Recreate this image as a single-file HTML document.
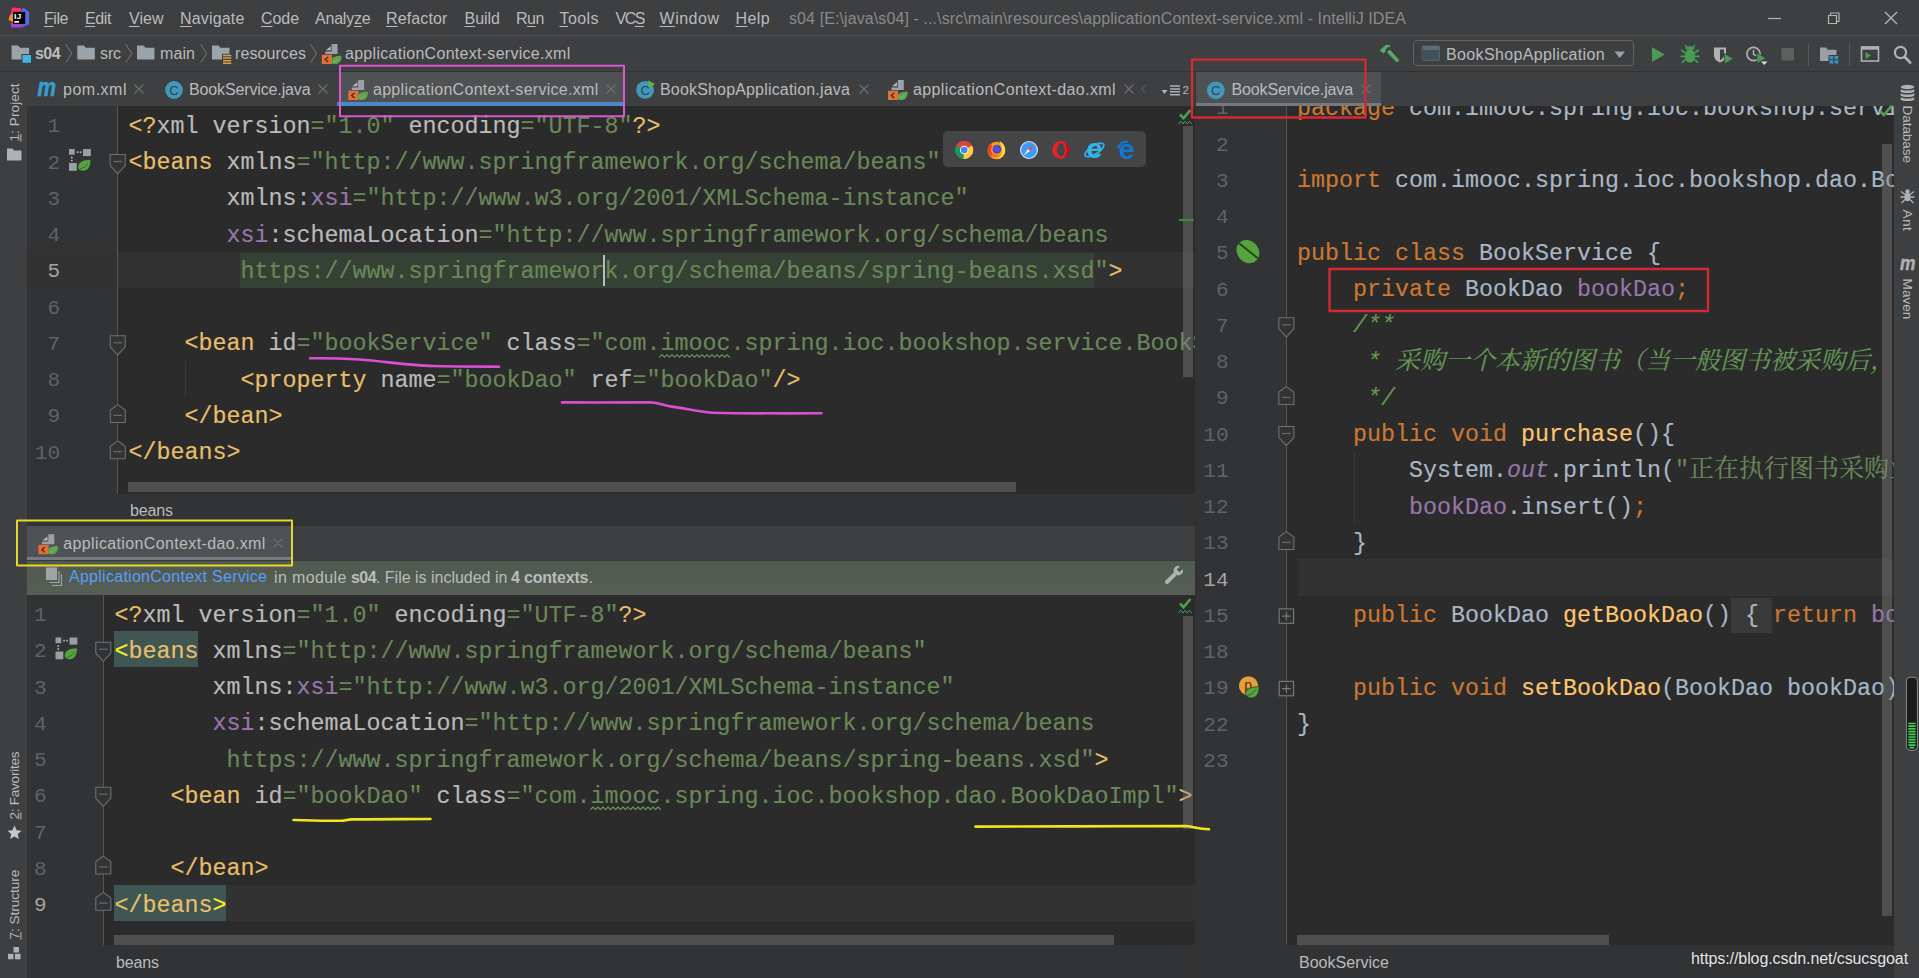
<!DOCTYPE html>
<html lang="en">
<head>
<meta charset="utf-8">
<title>s04 - applicationContext-service.xml - IntelliJ IDEA</title>
<style>
html,body{margin:0;padding:0;background:#3d3f41;}
body{width:1919px;height:978px;position:relative;overflow:hidden;font-family:"Liberation Sans","Noto Sans CJK SC",sans-serif;color:#bbbbbb;}
.abs{position:absolute;}
.ui{position:absolute;white-space:nowrap;font-size:16px;line-height:20px;color:#bbbbbb;transform-origin:0 50%;}
.pane{position:absolute;overflow:hidden;background:#2b2b2b;}
.gut{position:absolute;top:0;bottom:0;left:0;background:#313335;border-right:1px solid #555555;box-sizing:border-box;}
.code{position:absolute;left:0;top:0;font-family:"Liberation Mono","Noto Sans CJK SC",monospace;font-size:23.33px;line-height:36.25px;white-space:pre;color:#a9b7c6;-webkit-text-stroke:0.15px currentColor;}
.l{position:absolute;left:0;height:36.25px;top:calc(var(--i) * 36.25px);white-space:pre;}
.num{position:absolute;font-family:"Liberation Mono",monospace;font-size:21px;line-height:36.25px;color:#606366;text-align:right;white-space:pre;}
.num div{height:36.25px;}
.num .cur{color:#a4a3a3;}
.y{color:#ffef28}.t{color:#e8bf6a}.a{color:#bababa}.v{color:#6a8759}.p{color:#9876aa}.k{color:#cc7832}.m{color:#ffc66d}.d{color:#629755;font-style:italic}.w{color:#a9b7c6}
.cj{font-family:"Noto Serif CJK SC","Noto Sans CJK SC",serif;font-size:25px;line-height:20px;}
.typo{}
.ui u{text-decoration:underline;text-underline-offset:2px;text-decoration-thickness:1px;}
.vt{position:absolute;white-space:nowrap;font-size:13.6px;line-height:16px;height:16px;margin-top:-12.6px;transform-origin:0 12.6px;color:#bbbbbb;}
.vt u{text-underline-offset:1.2px;text-decoration-thickness:1px;}
.sb{position:absolute;background:rgba(128,128,128,.42);}
</style>
</head>
<body>
<!-- ===== menu bar ===== -->
<div class="abs" id="menubar" style="left:0;top:0;width:1919px;height:35px;background:#3d3f41;border-bottom:1px solid #515151;"></div>
<!-- ===== nav bar ===== -->
<div class="abs" id="navbar" style="left:0;top:36px;width:1919px;height:35px;background:#3d3f41;border-bottom:1px solid #323232;"></div>
<!-- ===== left strip ===== -->
<div class="abs" id="lstrip" style="left:0;top:72px;width:27px;height:906px;background:#3d3f41;"></div>
<!-- ===== right strip ===== -->
<div class="abs" id="rstrip" style="left:1894px;top:72px;width:25px;height:906px;background:#3d3f41;"></div>
<!-- ===== tab rows ===== -->
<div class="abs" id="tabsL" style="left:27px;top:72px;width:1168px;height:34px;background:#3d3f41;"></div>
<div class="abs" id="tabsR" style="left:1197px;top:72px;width:697px;height:34px;background:#3d3f41;"></div>
<!-- ===== top-left editor ===== -->
<div class="pane" id="edTop" style="left:27px;top:106px;width:1168px;height:388px;">
  <div class="abs" style="left:91px;top:146px;width:1077px;height:36.25px;background:#323232;"></div>
  <div class="gut" style="width:91px;"></div>
  <div class="abs" style="left:0;top:146px;width:90px;height:36.25px;background:#323232;"></div>
  <div class="num" style="left:0;top:3.4px;width:33px;"><div>1</div><div>2</div><div>3</div><div>4</div><div class="cur">5</div><div>6</div><div>7</div><div>8</div><div>9</div><div>10</div></div>
  <div class="abs" style="left:213px;top:147px;width:854px;height:35px;background:#364135;"></div>
  <div class="code" style="left:101.6px;top:2.8px;">
<div class="l" style="--i:0"><span class="t">&lt;?</span><span class="a">xml version</span><span class="v">="1.0"</span><span class="a"> encoding</span><span class="v">="UTF-8"</span><span class="t">?&gt;</span></div>
<div class="l" style="--i:1"><span class="t">&lt;beans </span><span class="a">xmlns</span><span class="v">="http://www.springframework.org/schema/beans"</span></div>
<div class="l" style="--i:2">       <span class="a">xmlns:</span><span class="p">xsi</span><span class="v">="http://www.w3.org/2001/XMLSchema-instance"</span></div>
<div class="l" style="--i:3">       <span class="p">xsi</span><span class="a">:schemaLocation</span><span class="v">="http://www.springframework.org/schema/beans</span></div>
<div class="l" style="--i:4">        <span class="v">https://www.springframework.org/schema/beans/spring-beans.xsd"</span><span class="t">&gt;</span></div>
<div class="l" style="--i:6">    <span class="t">&lt;bean </span><span class="a">id</span><span class="v">="bookService"</span><span class="a"> class</span><span class="v">="com.<span class="typo">imooc</span>.spring.ioc.bookshop.service.BookService"</span><span class="t">&gt;</span></div>
<div class="l" style="--i:7">        <span class="t">&lt;property </span><span class="a">name</span><span class="v">="bookDao"</span><span class="a"> ref</span><span class="v">="bookDao"</span><span class="t">/&gt;</span></div>
<div class="l" style="--i:8">    <span class="t">&lt;/bean&gt;</span></div>
<div class="l" style="--i:9"><span class="t">&lt;/beans&gt;</span></div>
  </div>
  <div class="abs" style="left:576px;top:149px;width:2px;height:31px;background:#bbbbbb;"></div>
  <div class="abs" style="left:157.5px;top:256px;width:1px;height:35px;background:#393939;"></div>
  <!-- v scrollbar -->
  <div class="sb" style="left:1156px;top:20px;width:10px;height:251px;"></div>
  <div class="abs" style="left:1152px;top:113px;width:15px;height:2px;background:#3c8a3c;"></div>
  <!-- h scrollbar -->
  <div class="sb" style="left:101px;top:376px;width:888px;height:10px;"></div>
</div>
<!-- breadcrumb top -->
<div class="abs" id="bcTop" style="left:27px;top:494px;width:1168px;height:32px;background:#313335;"></div>
<!-- bottom tab row -->
<div class="abs" id="tabsB" style="left:27px;top:526px;width:1168px;height:34px;background:#3d3f41;"></div>
<!-- banner -->
<div class="abs" id="banner" style="left:27px;top:560px;width:1168px;height:34.5px;background:linear-gradient(#505a50,#565e55);border-top:1px solid #363a36;box-sizing:border-box;"></div>
<!-- ===== bottom-left editor ===== -->
<div class="pane" id="edBot" style="left:27px;top:594.5px;width:1168px;height:350.5px;">
  <div class="abs" style="left:87px;top:290.25px;width:1081px;height:36.25px;background:#323232;"></div>
  <div class="gut" style="width:77px;"></div>
  <div class="num" style="left:0;top:3.6px;width:19.5px;"><div>1</div><div>2</div><div>3</div><div>4</div><div>5</div><div>6</div><div>7</div><div>8</div><div class="cur">9</div></div>
  <div class="abs" style="left:87px;top:36.5px;width:84px;height:36px;background:#3f5653;"></div>
  <div class="abs" style="left:87px;top:290.25px;width:112px;height:36px;background:#3f5653;"></div>
  <div class="code" style="left:87.6px;top:3px;">
<div class="l" style="--i:0"><span class="t">&lt;?</span><span class="a">xml version</span><span class="v">="1.0"</span><span class="a"> encoding</span><span class="v">="UTF-8"</span><span class="t">?&gt;</span></div>
<div class="l" style="--i:1"><span class="y">&lt;</span><span class="t">beans </span><span class="a">xmlns</span><span class="v">="http://www.springframework.org/schema/beans"</span></div>
<div class="l" style="--i:2">       <span class="a">xmlns:</span><span class="p">xsi</span><span class="v">="http://www.w3.org/2001/XMLSchema-instance"</span></div>
<div class="l" style="--i:3">       <span class="p">xsi</span><span class="a">:schemaLocation</span><span class="v">="http://www.springframework.org/schema/beans</span></div>
<div class="l" style="--i:4">        <span class="v">https://www.springframework.org/schema/beans/spring-beans.xsd"</span><span class="t">&gt;</span></div>
<div class="l" style="--i:5">    <span class="t">&lt;bean </span><span class="a">id</span><span class="v">="bookDao"</span><span class="a"> class</span><span class="v">="com.<span class="typo">imooc</span>.spring.ioc.bookshop.dao.BookDaoImpl"</span><span class="t">&gt;</span></div>
<div class="l" style="--i:7">    <span class="t">&lt;/bean&gt;</span></div>
<div class="l" style="--i:8"><span class="t">&lt;/beans</span><span class="y">&gt;</span></div>
  </div>
  <!-- v scrollbar -->
  <div class="sb" style="left:1156px;top:21.5px;width:10px;height:213px;"></div>
  <!-- h scrollbar -->
  <div class="sb" style="left:87px;top:340.5px;width:1000px;height:10px;"></div>
</div>
<div class="abs" id="bcBot" style="left:27px;top:945px;width:1168px;height:33px;background:#313335;"></div>
<!-- ===== right editor ===== -->
<div class="pane" id="edR" style="left:1197px;top:106px;width:697px;height:839px;">
  <div class="abs" style="left:100.5px;top:453.4px;width:598px;height:36.4px;background:#323232;"></div>
  <div class="gut" style="width:90px;"></div>
  <div class="num" style="left:0;top:-14.6px;width:31.5px;"><div>1</div><div>2</div><div>3</div><div>4</div><div>5</div><div>6</div><div>7</div><div>8</div><div>9</div><div>10</div><div>11</div><div>12</div><div>13</div><div class="cur">14</div><div>15</div><div>18</div><div>19</div><div>22</div><div>23</div></div>
  <div class="abs" style="left:534px;top:492px;width:41px;height:35px;background:#3a3a3a;"></div>
  <div class="code" style="left:100px;top:-15.2px;">
<div class="l" style="--i:0"><span class="k">package</span> com.imooc.spring.ioc.bookshop.service;</div>
<div class="l" style="--i:2"><span class="k">import</span> com.imooc.spring.ioc.bookshop.dao.BookDao;</div>
<div class="l" style="--i:4"><span class="k">public class</span> BookService {</div>
<div class="l" style="--i:5">    <span class="k">private</span> BookDao <span class="p">bookDao</span><span class="k">;</span></div>
<div class="l" style="--i:6">    <span class="d">/**</span></div>
<div class="l" style="--i:7">     <span class="d">* <span class="cj">采购一个本新的图书（当一般图书被采购后，系统自动补货）</span></span></div>
<div class="l" style="--i:8">     <span class="d">*/</span></div>
<div class="l" style="--i:9">    <span class="k">public void</span> <span class="m">purchase</span>(){</div>
<div class="l" style="--i:10">        System.<span class="p" style="font-style:italic">out</span>.println(<span class="v">"<span class="cj">正在执行图书采购业务</span>"</span>)<span class="k">;</span></div>
<div class="l" style="--i:11">        <span class="p">bookDao</span>.insert()<span class="k">;</span></div>
<div class="l" style="--i:12">    }</div>
<div class="l" style="--i:14">    <span class="k">public</span> BookDao <span class="m">getBookDao</span>() { <span class="k">return</span> <span class="p">bookDao</span><span class="k">;</span> }</div>
<div class="l" style="--i:16">    <span class="k">public void</span> <span class="m">setBookDao</span>(BookDao bookDao) { <span class="k">this</span>.<span class="p">bookDao</span> = bookDao<span class="k">;</span> }</div>
<div class="l" style="--i:17">}</div>
  </div>
  <div class="abs" style="left:156.5px;top:346px;width:1px;height:71px;background:#393939;"></div>
  <!-- v scrollbar -->
  <div class="sb" style="left:685px;top:38px;width:9.5px;height:772px;"></div>
  <!-- h scrollbar -->
  <div class="sb" style="left:100px;top:829px;width:312px;height:10px;"></div>
</div>
<div class="abs" id="bcR" style="left:1197px;top:945px;width:697px;height:33px;background:#313335;"></div>
<!-- splitter -->
<div class="abs" style="left:1195px;top:72px;width:2px;height:906px;background:#323232;"></div>
<!-- tab decorations -->
<div class="abs" style="left:340px;top:72px;width:285px;height:30px;background:#4e5254;"></div>
<div class="abs" style="left:337px;top:102px;width:288px;height:4px;background:#4a88c7;"></div>
<div class="abs" style="left:1196px;top:72px;width:185px;height:30.5px;background:#4e5254;"></div>
<div class="abs" style="left:1196px;top:102.5px;width:185px;height:3.5px;background:#747a80;"></div>
<div class="abs" style="left:27px;top:526px;width:266px;height:30.5px;background:#4e5254;"></div>
<div class="abs" style="left:27px;top:556.5px;width:266px;height:3.5px;background:#747a80;"></div>
<!-- close marks -->
<svg class="abs" style="left:0;top:0;pointer-events:none" width="1919" height="978" viewBox="0 0 1919 978" fill="none" stroke="#6e6e6e" stroke-width="1.2" stroke-linecap="round">
<path d="M135 85l8 8m0-8l-8 8 M319 85l8 8m0-8l-8 8 M607 85l8 8m0-8l-8 8 M860 85l8 8m0-8l-8 8 M1125 85l8 8m0-8l-8 8 M1362 85l8 8m0-8l-8 8 M274 539l8 8m0-8l-8 8"/>
<path d="M1145 85l-3 4l3 4" stroke="#5a5d5f"/>
</svg>
<!-- /tab decorations -->
<!-- chrome text 1 -->
<span class="ui" style="left:44px;top:9.3px;letter-spacing:-0.445px;"><u>F</u>ile</span>
<span class="ui" style="left:85px;top:9.3px;letter-spacing:-0.395px;"><u>E</u>dit</span>
<span class="ui" style="left:129px;top:9.3px;letter-spacing:+0.027px;"><u>V</u>iew</span>
<span class="ui" style="left:180px;top:9.3px;letter-spacing:+0.168px;"><u>N</u>avigate</span>
<span class="ui" style="left:261px;top:9.3px;letter-spacing:-0.062px;"><u>C</u>ode</span>
<span class="ui" style="left:315px;top:9.3px;letter-spacing:-0.203px;">Analy<u>z</u>e</span>
<span class="ui" style="left:386px;top:9.3px;letter-spacing:+0.129px;"><u>R</u>efactor</span>
<span class="ui" style="left:464.5px;top:9.3px;letter-spacing:-0.016px;"><u>B</u>uild</span>
<span class="ui" style="left:516px;top:9.3px;letter-spacing:-0.453px;">R<u>u</u>n</span>
<span class="ui" style="left:559.5px;top:9.3px;letter-spacing:+0.428px;"><u>T</u>ools</span>
<span class="ui" style="left:615.5px;top:9.3px;letter-spacing:-1.469px;">VC<u>S</u></span>
<span class="ui" style="left:659.5px;top:9.3px;letter-spacing:+0.516px;"><u>W</u>indow</span>
<span class="ui" style="left:735.5px;top:9.3px;letter-spacing:+0.398px;"><u>H</u>elp</span>
<span class="ui" style="left:789px;top:9.3px;letter-spacing:+0.099px;color:#8a8a8a;">s04 [E:\java\s04] - ...\src\main\resources\applicationContext-service.xml - IntelliJ IDEA</span>
<span class="ui" style="left:35px;top:44.3px;letter-spacing:-0.568px;font-weight:bold;">s04</span>
<span class="ui" style="left:100px;top:44.3px;letter-spacing:-0.109px;">src</span>
<span class="ui" style="left:160px;top:44.3px;letter-spacing:+0.078px;">main</span>
<span class="ui" style="left:235px;top:44.3px;letter-spacing:+0.083px;">resources</span>
<span class="ui" style="left:345px;top:44.3px;letter-spacing:+0.284px;">applicationContext-service.xml</span>
<span class="ui" style="left:1446px;top:44.8px;letter-spacing:+0.363px;">BookShopApplication</span>
<span class="ui" style="left:63px;top:79.7px;letter-spacing:+0.507px;">pom.xml</span>
<span class="ui" style="left:189px;top:79.7px;letter-spacing:-0.133px;">BookService.java</span>
<span class="ui" style="left:373px;top:79.7px;letter-spacing:+0.284px;">applicationContext-service.xml</span>
<span class="ui" style="left:660px;top:79.7px;letter-spacing:+0.171px;">BookShopApplication.java</span>
<span class="ui" style="left:913px;top:79.7px;letter-spacing:+0.385px;">applicationContext-dao.xml</span>
<span class="ui" style="left:1231.5px;top:79.7px;letter-spacing:-0.133px;">BookService.java</span>
<span class="ui" style="left:1182.5px;top:80.0px;letter-spacing:+0.000px;font-size:11.5px;">2</span>
<span class="ui" style="left:63.3px;top:533.8px;letter-spacing:+0.362px;">applicationContext-dao.xml</span>
<span class="ui" style="left:69px;top:566.5px;letter-spacing:+0.272px;color:#589df6;">ApplicationContext Service</span>
<span class="ui" style="left:130px;top:500.8px;letter-spacing:-0.119px;">beans</span>
<span class="ui" style="left:116px;top:952.5px;letter-spacing:-0.119px;">beans</span>
<span class="ui" style="left:1299px;top:952.5px;letter-spacing:+0.016px;">BookService</span>
<!-- /chrome text 1 -->
<!-- chrome text 2 -->
<span class="ui" style="left:274px;top:568.3px;letter-spacing:+0.369px;">in module</span>
<span class="ui" style="left:351px;top:568.3px;letter-spacing:-0.568px;font-weight:bold;">s04</span>
<span class="ui" style="left:376px;top:568.3px;letter-spacing:-0.015px;">. File is included in</span>
<span class="ui" style="left:511px;top:568.3px;letter-spacing:-0.184px;font-weight:bold;">4 contexts</span>
<span class="ui" style="left:588.5px;top:568.3px;letter-spacing:+0.000px;">.</span>
<span class="ui" style="left:1691px;top:948.5px;letter-spacing:-0.087px;color:#e6e6e6;text-shadow:0 0 2px #222;">https://blog.csdn.net/csucsgoat</span>
<span class="vt" style="left:20px;top:141.5px;letter-spacing:+0.086px;transform:rotate(-90deg);"><u>1</u>: Project</span>
<span class="vt" style="left:20px;top:819.5px;letter-spacing:-0.262px;transform:rotate(-90deg);"><u>2</u>: Favorites</span>
<span class="vt" style="left:20px;top:940px;letter-spacing:-0.031px;transform:rotate(-90deg);"><u>7</u>: Structure</span>
<span class="vt" style="left:1901.5px;top:105.5px;letter-spacing:-0.117px;transform:rotate(90deg);">Database</span>
<span class="vt" style="left:1901.5px;top:209.5px;letter-spacing:+0.328px;transform:rotate(90deg);">Ant</span>
<span class="vt" style="left:1901.5px;top:278.5px;letter-spacing:-0.006px;transform:rotate(90deg);">Maven</span>
<!-- /chrome text 2 -->
<!-- icons layer A: toolbar -->
<div class="abs" style="left:1413px;top:40px;width:221px;height:26px;border:1px solid #646464;border-radius:4px;box-sizing:border-box;"></div>
<svg class="abs" style="left:0;top:0;pointer-events:none" width="1919" height="72" viewBox="0 0 1919 72">
<!-- window controls -->
<g stroke="#b4b4b4" stroke-width="1.2" fill="none">
<path d="M1768 18.5h13"/>
<path d="M1828.5 15.5h8v8h-8z M1830.5 15.5v-2.5h8.5v8.5h-2.5"/>
<path d="M1885 12l12 12m0-12l-12 12" stroke-width="1.4"/>
</g>
<!-- hammer -->
<g fill="#59a869">
<path d="M1379.5 50.5l6.2-5.4c1.3-.6 3.2-.4 5 .6l-1.4 1.6l-1.2-.2l-2.6 2.6l.3 1.4l-2.2 2.3z"/>
<path d="M1387 52.2l2.6-2.6l9.4 10.2c.5.7-1.7 2.9-2.5 2.4z"/>
</g>
<!-- run config icon -->
<g>
<rect x="1422.5" y="46" width="17" height="14.5" rx="1" fill="#42525a" stroke="#55626a" stroke-width="1"/>
<rect x="1422.5" y="46" width="17" height="4" fill="#5f6b72"/>
<rect x="1421" y="49" width="3.5" height="10" fill="#4a4f52" opacity=".8"/>
</g>
<!-- dropdown arrow -->
<path d="M1614.5 51.5h10.5l-5.25 6.5z" fill="#9da0a2"/>
<!-- play -->
<path d="M1652 47.3v14.6l12.8-7.3z" fill="#499c54"/>
<!-- bug -->
<g fill="#499c54">
<ellipse cx="1690" cy="56" rx="5.2" ry="6.6"/>
<path d="M1685.6 49.8a4.4 3.6 0 0 1 8.8 0z"/>
<g stroke="#499c54" stroke-width="1.7" fill="none" stroke-linecap="round">
<path d="M1684.8 52.5l-3-2.2 M1695.2 52.5l3-2.2 M1684.6 56.3h-3.4 M1695.4 56.3h3.4 M1685 60l-2.8 2.3 M1695 60l2.8 2.3 M1687 47.5l-1.5-1.7 M1693 47.5l1.5-1.7"/>
</g>
</g>
<!-- coverage -->
<g>
<path d="M1714 47.5h12v7.5c0 4-3 6.5-6 7.5c-3-1-6-3.500-6-7.500z" fill="#afb1b3"/>
<path d="M1720 49.5h4v5.5c0 2.600-1.800 4.200-4 5.200z" fill="#3d3f41"/>
<path d="M1724.500 53.500v10.500l9-5.250z" fill="#499c54" stroke="#3d3f41" stroke-width=".8"/>
</g>
<!-- profiler -->
<g>
<circle cx="1753.500" cy="54" r="6.600" fill="none" stroke="#afb1b3" stroke-width="1.700"/>
<path d="M1753.500 50v4.300l2.800 1.600" stroke="#afb1b3" stroke-width="1.500" fill="none"/>
<path d="M1757 52.800v10.800l9-5.400z" fill="#499c54" stroke="#3d3f41" stroke-width=".8"/>
<path d="M1761 61.500h6.500l-3.250 3.600z" fill="#d8d8d8"/>
</g>
<!-- stop -->
<rect x="1781.500" y="48" width="12.500" height="12.500" fill="#5e6060"/>
<!-- separators -->
<path d="M1808.500 43v23 M1849.500 43v23" stroke="#555758" stroke-width="1"/>
<!-- project structure -->
<g>
<path d="M1820 47.500h6l1.800 2.200h8.700v11.300h-16.500z" fill="#9aa0a3"/>
<rect x="1828.500" y="55" width="10.500" height="9" fill="#3d3f41"/>
<rect x="1829.500" y="56" width="3.800" height="3.300" fill="#3592c4"/><rect x="1834.500" y="56" width="3.800" height="3.300" fill="#3592c4"/>
<rect x="1829.500" y="60.300" width="3.800" height="3.300" fill="#3592c4"/><rect x="1834.500" y="60.300" width="3.800" height="3.300" fill="#3592c4"/>
</g>
<!-- run anything -->
<g>
<rect x="1861.500" y="47" width="17" height="14" fill="none" stroke="#afb1b3" stroke-width="1.600"/>
<rect x="1861" y="46.500" width="18" height="3.200" fill="#afb1b3"/>
<path d="M1865.500 52v7l5.600-3.500z" fill="#499c54"/>
</g>
<!-- search -->
<g stroke="#afb1b3" fill="none" stroke-linecap="round">
<circle cx="1900.500" cy="52.500" r="5.600" stroke-width="2.200"/>
<path d="M1904.800 57l5.400 5.600" stroke-width="2.800"/>
</g>
</svg>
<!-- /icons layer A -->
<!-- icons layer B: nav+tabs -->
<svg class="abs" style="left:0;top:0;pointer-events:none" width="1919" height="978" viewBox="0 0 1919 978">
<path transform="translate(11.6 45.4)" d="M0 0h6.500l2 2.400h9v11.700H0z" fill="#9aa4ab"/>
<rect x="21.500" y="54" width="10" height="9.500" fill="#3c3f41"/><rect x="22.500" y="55" width="8.500" height="7.800" fill="#40b6e0"/>
<path d="M65.7 44.2l6 9.300l-6 9.300" stroke="#6c6f71" stroke-width="1.100" fill="none"/>
<path transform="translate(77.3 45.4)" d="M0 0h6.500l2 2.400h9v11.700H0z" fill="#9aa4ab"/>
<path d="M125.7 44.2l6 9.300l-6 9.300" stroke="#6c6f71" stroke-width="1.100" fill="none"/>
<path transform="translate(137 45.4)" d="M0 0h6.500l2 2.400h9v11.700H0z" fill="#9aa4ab"/>
<path d="M200.7 44.2l6 9.300l-6 9.300" stroke="#6c6f71" stroke-width="1.100" fill="none"/>
<path transform="translate(212 45.4)" d="M0 0h6.500l2 2.400h9v11.700H0z" fill="#9aa4ab"/>
<rect x="222" y="53.800" width="10" height="10" fill="#3c3f41"/><path d="M223 55.500h8.300M223 58.100h8.300M223 60.700h8.300M223 63.200h8.300" stroke="#d9a343" stroke-width="1.500"/>
<path d="M310.5 44.2l6 9.300l-6 9.300" stroke="#6c6f71" stroke-width="1.100" fill="none"/>
<g transform="translate(321.8 44)">
<path d="M9.8 0h6v10H3.500V7.500h6.300z" fill="#9aa1a8"/>
<path d="M4 6.300L9 2.300v4z" fill="#b5babf"/>
<rect x="0" y="10.700" width="10.200" height="9.300" fill="#e0703a"/>
<path d="M6.300 13l-3 2.500l3 2.500" stroke="#55260d" stroke-width="1.300" fill="none"/>
<path d="M9.500 17.200c0-4 4-5.600 10.200-5.500c.2 5-2 8.400-6.200 8.400c-2.500 0-4-1.200-4-2.900z" fill="#5fa34f"/>
<path d="M11 18.300c2-.4 4.500-1.800 6-4" stroke="#8fc67f" stroke-width=".7" fill="none"/>
</g>
<circle cx="174" cy="90" r="8.900" fill="#4597b8"/><text x="169.3" y="94.6" font-family="Liberation Sans,sans-serif" font-size="13" fill="#1f485c">C</text>
<g transform="translate(348.3 80)">
<path d="M9.8 0h6v10H3.500V7.500h6.300z" fill="#9aa1a8"/>
<path d="M4 6.300L9 2.300v4z" fill="#b5babf"/>
<rect x="0" y="10.700" width="10.200" height="9.300" fill="#e0703a"/>
<path d="M6.300 13l-3 2.500l3 2.500" stroke="#55260d" stroke-width="1.300" fill="none"/>
<path d="M9.500 17.200c0-4 4-5.600 10.200-5.500c.2 5-2 8.400-6.200 8.400c-2.500 0-4-1.200-4-2.900z" fill="#5fa34f"/>
<path d="M11 18.300c2-.4 4.500-1.800 6-4" stroke="#8fc67f" stroke-width=".7" fill="none"/>
</g>
<circle cx="645.1" cy="89.9" r="8.900" fill="#4597b8"/><text x="640.4" y="94.5" font-family="Liberation Sans,sans-serif" font-size="13" fill="#1f485c">C</text><path d="M648.3 80.3l6.800 4l-6.500 3.400z" fill="#62b543"/>
<g transform="translate(888 80)">
<path d="M9.8 0h6v10H3.500V7.500h6.300z" fill="#9aa1a8"/>
<path d="M4 6.300L9 2.300v4z" fill="#b5babf"/>
<rect x="0" y="10.700" width="10.200" height="9.300" fill="#e0703a"/>
<path d="M6.300 13l-3 2.500l3 2.500" stroke="#55260d" stroke-width="1.300" fill="none"/>
<path d="M9.500 17.200c0-4 4-5.600 10.200-5.500c.2 5-2 8.400-6.200 8.400c-2.500 0-4-1.200-4-2.900z" fill="#5fa34f"/>
<path d="M11 18.300c2-.4 4.500-1.800 6-4" stroke="#8fc67f" stroke-width=".7" fill="none"/>
</g>
<circle cx="1215.8" cy="90.3" r="8.900" fill="#4597b8"/><text x="1211.1" y="94.9" font-family="Liberation Sans,sans-serif" font-size="13" fill="#1f485c">C</text>
<g transform="translate(38.5 534.2)">
<path d="M9.8 0h6v10H3.500V7.500h6.300z" fill="#9aa1a8"/>
<path d="M4 6.300L9 2.300v4z" fill="#b5babf"/>
<rect x="0" y="10.700" width="10.200" height="9.300" fill="#e0703a"/>
<path d="M6.300 13l-3 2.500l3 2.500" stroke="#55260d" stroke-width="1.300" fill="none"/>
<path d="M9.500 17.200c0-4 4-5.600 10.200-5.500c.2 5-2 8.400-6.200 8.400c-2.500 0-4-1.200-4-2.900z" fill="#5fa34f"/>
<path d="M11 18.300c2-.4 4.500-1.800 6-4" stroke="#8fc67f" stroke-width=".7" fill="none"/>
</g>
<text x="37.500" y="96" font-family="Liberation Sans,sans-serif" font-size="25" font-weight="bold" font-style="italic" fill="#3a9ccc" stroke="#3a9ccc" stroke-width=".7" textLength="18.500" lengthAdjust="spacingAndGlyphs">m</text>
<path d="M1161.500 90h6l-3 4z" fill="#afb1b3"/><path d="M1170 86h10M1170 88.900h10M1170 91.800h10M1170 94.700h10" stroke="#afb1b3" stroke-width="1.500"/>
</svg>
<!-- /icons layer B -->
<!-- logo -->
<svg class="abs" style="left:0;top:0;pointer-events:none" width="40" height="35" viewBox="0 0 40 35">
<path d="M12 7.600l8.500 .400l1 4.500l-8 5l-3.500-1.500z" fill="#fb2f6a"/>
<path d="M9.700 15.500l3.300-2l.5 9l-5-2.400z" fill="#f58a34"/>
<path d="M21.200 9.600l2.500-1.900l5.600 4.600l-.4 12.200l-7.700 3.100l-1-10z" fill="#566be6"/>
<path d="M10.800 23.500l3 -2l8 2l-.6 4.100l-9.800-.1z" fill="#b03fd0"/>
<path d="M21 27.600l7.900-3.100l-6-1z" fill="#5a5fe0"/>
<rect x="13" y="11.800" width="12.200" height="12.200" fill="#000"/>
<text x="14.100" y="18.700" font-family="Liberation Sans,sans-serif" font-weight="bold" font-size="8" fill="#fff" textLength="7.200" lengthAdjust="spacingAndGlyphs">IJ</text>
<rect x="14.300" y="21" width="4.700" height="1.700" fill="#fff"/>
</svg>
<!-- /logo -->
<!-- icons layer C: gutters -->
<svg class="abs" style="left:0;top:0;pointer-events:none" width="1919" height="978" viewBox="0 0 1919 978" fill="none">
<path d="M110.2 154.5h15v11l-7.500 8.100l-7.500-8.100z" fill="#313335" stroke="#6e7072" stroke-width="1.100"/><path d="M113.5 161.5h8.600" stroke="#6e7072" stroke-width="1.100"/>
<path d="M110.2 335.8h15v11l-7.500 8.100l-7.500-8.100z" fill="#313335" stroke="#6e7072" stroke-width="1.100"/><path d="M113.5 342.8h8.600" stroke="#6e7072" stroke-width="1.100"/>
<path d="M117.8 404.6l7.500 5.400v12.500h-15v-12.500z" fill="#313335" stroke="#6e7072" stroke-width="1.100"/><path d="M113.5 415.4h8.600" stroke="#6e7072" stroke-width="1.100"/>
<path d="M117.8 440.9l7.500 5.400v12.500h-15v-12.500z" fill="#313335" stroke="#6e7072" stroke-width="1.100"/><path d="M113.5 451.7h8.600" stroke="#6e7072" stroke-width="1.100"/>
<g transform="translate(69 149)"><rect x="0" y="0" width="5.700" height="5.700" fill="#9a9fa3"/><rect x="14" y="0" width="7.800" height="7.100" fill="#9a9fa3"/><rect x="0" y="14" width="7.800" height="7.800" fill="#9a9fa3"/>
<rect x="7.700" y="2.300" width="1.700" height="1.700" fill="#b0b3b5"/><rect x="10.700" y="2.300" width="1.700" height="1.700" fill="#b0b3b5"/><rect x="1.900" y="7.700" width="1.700" height="1.700" fill="#b0b3b5"/><rect x="1.900" y="10.700" width="1.700" height="1.700" fill="#b0b3b5"/>
<path d="M9.200 18.200c0-5 5-7.200 12.200-7.400c.2 6.500-2.300 11-7.400 11c-3 0-4.800-1.500-4.800-3.600z" fill="#56a33f"/><path d="M10.800 20c3-.6 6.200-2.600 8.200-6" stroke="#2d6b1e" stroke-width=".9" fill="none"/></g>
<path d="M95.8 642.2h15v11l-7.500 8.100l-7.500-8.100z" fill="#313335" stroke="#6e7072" stroke-width="1.100"/><path d="M99.0 649.2h8.600" stroke="#6e7072" stroke-width="1.100"/>
<path d="M95.8 787.2h15v11l-7.500 8.100l-7.500-8.100z" fill="#313335" stroke="#6e7072" stroke-width="1.100"/><path d="M99.0 794.2h8.600" stroke="#6e7072" stroke-width="1.100"/>
<path d="M103.3 856.1l7.500 5.400v12.500h-15v-12.500z" fill="#313335" stroke="#6e7072" stroke-width="1.100"/><path d="M99.0 866.9h8.600" stroke="#6e7072" stroke-width="1.100"/>
<path d="M103.3 892.4l7.500 5.400v12.500h-15v-12.500z" fill="#313335" stroke="#6e7072" stroke-width="1.100"/><path d="M99.0 903.1h8.600" stroke="#6e7072" stroke-width="1.100"/>
<g transform="translate(55.5 637.5)"><rect x="0" y="0" width="5.700" height="5.700" fill="#9a9fa3"/><rect x="14" y="0" width="7.800" height="7.100" fill="#9a9fa3"/><rect x="0" y="14" width="7.800" height="7.800" fill="#9a9fa3"/>
<rect x="7.700" y="2.300" width="1.700" height="1.700" fill="#b0b3b5"/><rect x="10.700" y="2.300" width="1.700" height="1.700" fill="#b0b3b5"/><rect x="1.900" y="7.700" width="1.700" height="1.700" fill="#b0b3b5"/><rect x="1.900" y="10.700" width="1.700" height="1.700" fill="#b0b3b5"/>
<path d="M9.200 18.200c0-5 5-7.200 12.200-7.400c.2 6.500-2.300 11-7.400 11c-3 0-4.800-1.500-4.800-3.600z" fill="#56a33f"/><path d="M10.800 20c3-.6 6.200-2.600 8.200-6" stroke="#2d6b1e" stroke-width=".9" fill="none"/></g>
<path d="M1278.9 317.8h15v11l-7.500 8.100l-7.500-8.100z" fill="#313335" stroke="#6e7072" stroke-width="1.100"/><path d="M1282.1 324.8h8.600" stroke="#6e7072" stroke-width="1.100"/>
<path d="M1278.9 426.5h15v11l-7.500 8.100l-7.500-8.100z" fill="#313335" stroke="#6e7072" stroke-width="1.100"/><path d="M1282.1 433.5h8.600" stroke="#6e7072" stroke-width="1.100"/>
<path d="M1286.4 386.6l7.500 5.400v12.500h-15v-12.500z" fill="#313335" stroke="#6e7072" stroke-width="1.100"/><path d="M1282.1 397.4h8.600" stroke="#6e7072" stroke-width="1.100"/>
<path d="M1286.4 531.6l7.500 5.400v12.500h-15v-12.500z" fill="#313335" stroke="#6e7072" stroke-width="1.100"/><path d="M1282.1 542.4h8.600" stroke="#6e7072" stroke-width="1.100"/>
<rect x="1279.2" y="608.9" width="14.400" height="14.400" fill="#2d2f30" stroke="#7a7c7e" stroke-width="1.100"/><path d="M1282.1 616.1h8.600M1286.4 611.8v8.600" stroke="#7a7c7e" stroke-width="1.100"/>
<rect x="1279.2" y="681.4" width="14.400" height="14.400" fill="#2d2f30" stroke="#7a7c7e" stroke-width="1.100"/><path d="M1282.1 688.6h8.600M1286.4 684.3v8.600" stroke="#7a7c7e" stroke-width="1.100"/>
<g transform="translate(1247.900 251.600) rotate(-42)"><ellipse cx="0" cy="0" rx="10.600" ry="12.400" fill="#57a340"/></g><path d="M1238.800 243l20.200 16.200" stroke="#1f4a14" stroke-width="2"/>
<circle cx="1248.500" cy="685.800" r="9.600" fill="#e3a03c"/><text x="1244.300" y="690" font-family="Liberation Sans,sans-serif" font-size="14" fill="#5a2c0a">p</text>
<path d="M1245.500 693.500c0-4.500 5-6.600 13.600-6.800c.3 6-2.200 11.200-7.700 11.200c-3.500 0-5.900-2-5.900-4.400z" fill="#56a33f" stroke="#2a3a1e" stroke-width=".8"/><path d="M1247.500 695.500c3-.6 6.400-2.600 8.400-6" stroke="#2d6b1e" stroke-width=".9"/>
<path d="M1180 114.5l3.500 3.700l7-8.200" stroke="#4aa04f" stroke-width="2.600"/><path d="M1178.5 124.0l2.200-2.800l2.200 2.800l2.200-2.800l2.200 2.800l2.200-2.800l2.200 2.800" stroke="#4aa04f" stroke-width="1"/>
<path d="M1180 603.5l3.500 3.700l7-8.200" stroke="#4aa04f" stroke-width="2.600"/><path d="M1178.5 613.0l2.200-2.800l2.200 2.800l2.200-2.800l2.200 2.800l2.200-2.800l2.200 2.800" stroke="#4aa04f" stroke-width="1"/>
<path d="M1880 111l3.800 4l8-9.500" stroke="#4aa04f" stroke-width="2.600"/>
<g transform="translate(1173 576) rotate(45)"><path d="M-2 -3v11.500a2 2 0 0 0 4 0V-3z" fill="#afb1b3"/><path d="M-4.800 -7.500a4.800 4.800 0 1 0 9.600 0a4.800 4.800 0 0 0-2.800-4.400v4.600h-4v-4.600a4.800 4.800 0 0 0-2.800 4.400z" fill="#afb1b3"/></g>
<g stroke="#9ea4a8" stroke-width="1.100"><rect x="46.500" y="568" width="10" height="11.500" fill="#9ea4a8"/><path d="M59 571v11.500h-9.500M61.500 574v11.500h-9.500"/></g>
<path d="M7 148.500h5.500l1.500 2h7.500v10H7z" fill="#afb1b3"/>
<path d="M14.500 825.500l2.100 4.700l5 .500l-3.800 3.400l1.100 5l-4.400-2.600l-4.400 2.600l1.100-5l-3.800-3.400l5-.500z" fill="#c5c7c8"/>
<g fill="#afb1b3"><rect x="13.500" y="947" width="5.500" height="5.500"/><rect x="8" y="953.800" width="5.500" height="5.500"/><rect x="15" y="953.800" width="5.500" height="5.500"/></g>
<g fill="#afb1b3"><ellipse cx="1907.500" cy="87" rx="6.800" ry="2.200"/><path d="M1900.700 89.200c1.500 1.700 12.100 1.700 13.600 0v2.600c-1.500 1.700-12.100 1.700-13.600 0z M1900.700 93.200c1.500 1.700 12.100 1.700 13.600 0v2.600c-1.500 1.700-12.100 1.700-13.600 0z M1900.700 97.200c1.500 1.700 12.100 1.700 13.600 0v2.600c-1.500 1.700-12.100 1.700-13.600 0z"/></g>
<g stroke="#afb1b3" stroke-width="1.300"><ellipse cx="1907.500" cy="197" rx="2.400" ry="3.600" fill="#afb1b3"/><circle cx="1907.500" cy="191.500" r="1.600" fill="#afb1b3"/><path d="M1905 194.500l-4-3M1910 194.500l4-3M1905 197h-4.500M1910 197h4.500M1905 199.500l-3.500 3.500M1910 199.500l3.500 3.500"/></g>
<text x="1900" y="270" font-family="Liberation Sans,sans-serif" font-size="20" font-weight="bold" font-style="italic" fill="#afb1b3" stroke="#afb1b3" stroke-width=".5" textLength="15.500" lengthAdjust="spacingAndGlyphs">m</text>
<rect x="1906.400" y="677.300" width="11" height="73" rx="3.500" fill="#1b1b1b" stroke="#8a8a8a" stroke-width="1"/><path d="M1908.300 723.500h7.200M1908.300 726.200h7.200M1908.300 728.900h7.200M1908.300 731.600h7.200M1908.300 734.300h7.200M1908.300 737h7.200M1908.300 739.700h7.200M1908.300 742.400h7.200M1908.300 745.100h7.200M1909.500 747.600h4.800" stroke="#3fcf52" stroke-width="1.700"/>
</svg>
<!-- /icons layer C -->
<!-- browser popup -->
<div class="abs" style="left:942.5px;top:131.3px;width:203.5px;height:36px;background:#444546;border-radius:5px;"></div>
<svg class="abs" style="left:942px;top:131px;pointer-events:none" width="206" height="38" viewBox="942 131 206 38">
<!-- chrome -->
<g transform="translate(964.200 150)">
<circle r="9" fill="#db4437"/>
<path d="M0 0L-7.800 -4.500A9 9 0 0 0 -0.800 8.960z" fill="#0f9d58"/>
<path d="M0 0L-0.800 8.960A9 9 0 0 0 7.800 -4.500H0z" fill="#ffcd40"/>
<path d="M0 0L7.800 -4.500A9 9 0 0 0 -7.800 -4.500z" fill="#db4437"/>
<circle r="4.300" fill="#f1f1f1"/><circle r="3.300" fill="#4285f4"/>
</g>
<!-- firefox -->
<g transform="translate(996.400 150)">
<circle r="8.800" cy=".5" fill="#ff9a1f"/>
<path d="M-8.500 -1.500c0-3 2-6 4-7c-.5 1.500 0 2.500 1 3c2-1.500 5.500-1 7 1.500c1.500 2.500 1 6-1 8c-2.500 2.500-7 2.500-9.500-.5c-1-1.300-1.500-3-1.500-5z" fill="#e31587" opacity=".0"/>
<path d="M3 -9c3.500 1.500 6 5 5.800 9.500c-.2 4.500-4 8.500-8.800 8.800c5-2 6.500-6 5.800-10c-.5-3-1.500-6-2.800-8.300z" fill="#ffde3e"/>
<path d="M-8.600 .5c0-3.500 1.500-6 3.600-7.500c-.3 1.500 .2 2.600 1.200 3.200c-1.500 1.500-2 3.500-1.300 5.500c1 2.500 3.500 3.500 6 2.800c-1.500 2.500-5 3-7.300 1c-1.400-1.200-2.200-3-2.200-5z" fill="#f0421c"/>
<circle cx=".5" cy="-.8" r="4.300" fill="#3a3fbf"/>
<path d="M-3 -3.500c1.500-2 4.500-2.500 6.500-1c-1 .2-1.800 .8-2 1.800c1.500 0 2.500 1 2.500 2.300c0 1.500-1.500 2.800-3.500 2.600c-2.500-.2-4.500-2.700-3.500-5.700z" fill="#5b4fd6"/>
<path d="M-4.500 3.500c2 2.500 6 2.500 8 0c-1 3-4 4.500-7 3.500c-.8-.6-1.200-2-1-3.500z" fill="#ff7139"/>
</g>
<!-- safari -->
<g transform="translate(1029 150)">
<circle r="9" fill="#dfe6ee"/><circle r="7.900" fill="#3d9bf3"/>
<path d="M5.200 -5.200L1 1L-1 -1z" fill="#f04a3e"/><path d="M-5.200 5.200L-1 -1L1 1z" fill="#f4f6f8"/>
</g>
<!-- opera -->
<g transform="translate(1060.900 149.800)">
<ellipse rx="8.700" ry="9" fill="#e8202a"/><ellipse rx="3.900" ry="6.600" fill="#444546"/>
<path d="M2.500 -8.600c3.500 1 6.200 4.500 6.200 8.600s-2.700 7.600-6.200 8.600c2-1.800 3.300-5 3.300-8.600s-1.300-6.800-3.300-8.600z" fill="#b3101b"/>
</g>
<!-- IE -->
<g transform="translate(1094.400 150)">
<text x="-8" y="8" font-family="Liberation Sans,sans-serif" font-weight="bold" font-size="28" fill="#2fb5ea" textLength="16" lengthAdjust="spacingAndGlyphs">e</text>
<ellipse rx="10.800" ry="4.200" transform="rotate(-32)" fill="none" stroke="#2fb5ea" stroke-width="1.700"/>
</g>
<!-- edge -->
<g transform="translate(1126.200 150.500)">
<text x="-7.500" y="8" font-family="Liberation Sans,sans-serif" font-weight="bold" font-size="28" fill="#0f78d4" textLength="16" lengthAdjust="spacingAndGlyphs">e</text>
<path d="M-8 -2c1-4.500 5-7.500 9.500-6.500" stroke="#0f78d4" stroke-width="2.400" fill="none"/>
</g>
</svg>
<!-- /browser popup -->
<!-- annotations -->
<svg class="abs" style="left:0;top:0;pointer-events:none" width="1919" height="978" viewBox="0 0 1919 978" fill="none" stroke-linecap="round" stroke-linejoin="round">
<path d="M659.5 357.2l2.500-2.600l2.500 2.600l2.500-2.600l2.500 2.600l2.500-2.600l2.500 2.600l2.500-2.600l2.500 2.600l2.500-2.600l2.500 2.600l2.500-2.600l2.500 2.600l2.500-2.600l2.500 2.600l2.500-2.600l2.500 2.600l2.500-2.600l2.500 2.600l2.500-2.600l2.500 2.600l2.500-2.600l2.500 2.600l2.500-2.600l2.500 2.600l2.500-2.600l2.500 2.600l2.500-2.600l2.500 2.600" stroke="#6c9a5a" stroke-width="1.100" fill="none"/>
<path d="M590.5 809.6l2.500-2.600l2.500 2.600l2.500-2.600l2.500 2.600l2.500-2.600l2.500 2.600l2.500-2.600l2.500 2.600l2.500-2.600l2.500 2.600l2.500-2.600l2.500 2.600l2.500-2.600l2.500 2.600l2.500-2.600l2.500 2.600l2.500-2.600l2.500 2.600l2.500-2.600l2.500 2.600l2.500-2.600l2.500 2.600l2.500-2.600l2.500 2.600l2.500-2.600l2.500 2.600l2.500-2.600l2.500 2.600" stroke="#6c9a5a" stroke-width="1.100" fill="none"/>
<rect x="340" y="65.7" width="284" height="50.6" stroke="#d957cf" stroke-width="2"/>
<rect x="1192" y="59.7" width="173.5" height="57.8" stroke="#d62933" stroke-width="2.300"/>
<rect x="1329.500" y="269" width="378.500" height="42" stroke="#d62933" stroke-width="2.300"/>
<rect x="17" y="520.5" width="275" height="45" stroke="#e6d72c" stroke-width="2"/>
<path d="M310 358.3 C330 358 345 358.6 360 359.5 C385 361.5 410 365.5 433 366 C455 366.6 480 366.6 499 366.7" stroke="#dd4fd2" stroke-width="2.6"/>
<path d="M562 402.4 C590 402.6 630 402.2 650 402.3 C660 402.6 664 405.6 672 406.6 C685 408 697 412 712 412.7 C745 413.6 790 413.4 821.5 413.3" stroke="#dd4fd2" stroke-width="2.6"/>
<path d="M293.5 820 C310 820.6 330 820.9 343 820.6 C347 820 349 819.6 352 819.4 C380 819 410 819.2 430.5 819" stroke="#f3e420" stroke-width="2.6"/>
<path d="M975.5 826.6 C1040 826.4 1130 826.2 1186 826 C1194 826.6 1198 829 1209 829.2" stroke="#f3e420" stroke-width="2.6"/>
</svg>
<!-- /annotations -->
</body>
</html>
